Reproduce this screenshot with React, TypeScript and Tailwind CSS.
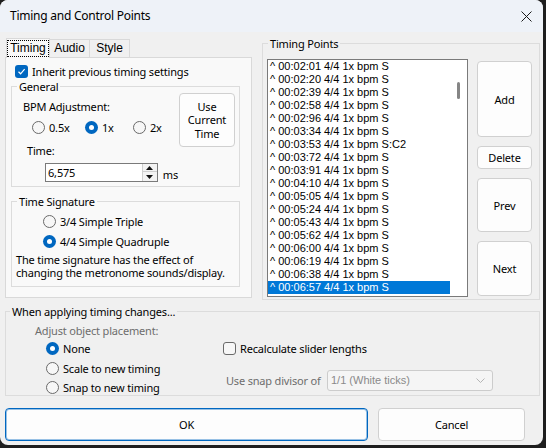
import React from 'react';

const ui = "font-['Noto_Sans',sans-serif] text-[11px] leading-[13px] tracking-[-0.18px]";

const points = [
  '00:02:01', '00:02:20', '00:02:39', '00:02:58', '00:02:96', '00:03:34',
  '00:03:53', '00:03:72', '00:03:91', '00:04:10', '00:05:05', '00:05:24',
  '00:05:43', '00:05:62', '00:06:00', '00:06:19', '00:06:38', '00:06:57',
];

function Radio({ checked }: { checked?: boolean }) {
  if (checked) {
    return (
      <span className="w-[13px] h-[13px] rounded-full bg-[#0067c0] flex items-center justify-center shrink-0">
        <span className="w-[5px] h-[5px] rounded-full bg-white" />
      </span>
    );
  }
  return <span className="w-[13px] h-[13px] rounded-full border border-[#6a6a6a] bg-[#f7f7f7] shrink-0" />;
}

function Check({ checked }: { checked?: boolean }) {
  if (checked) {
    return (
      <span className="w-[13px] h-[13px] rounded-[3px] bg-[#0067c0] flex items-center justify-center shrink-0">
        <svg width="9" height="9" viewBox="0 0 9 9">
          <polyline points="1.5,4.8 3.6,6.8 7.6,2.2" fill="none" stroke="white" strokeWidth="1.2" />
        </svg>
      </span>
    );
  }
  return <span className="w-[13px] h-[13px] rounded-[3px] border border-[#6a6a6a] bg-[#f7f7f7] shrink-0" />;
}

function Option({ checked, label, className }: { checked?: boolean; label: string; className?: string }) {
  return (
    <div className={`flex items-center gap-[4px] h-[13px] ${className ?? ''}`}>
      <Radio checked={checked} />
      <span className="whitespace-nowrap">{label}</span>
    </div>
  );
}

function Btn({ children, className }: { children: React.ReactNode; className?: string }) {
  return (
    <button className={`bg-[#fdfdfd] border border-[#d0d0d0] rounded-[4px] flex items-center justify-center text-center text-black ${className ?? ''}`}>
      {children}
    </button>
  );
}

export default function App() {
  return (
    <div className={`w-[546px] h-[448px] bg-[#1e1e1e] ${ui} text-black`}>
      <div className="w-[543px] h-[445px] rounded-[8px] overflow-hidden bg-[#f0f0f0] flex flex-col">
        {/* Title bar */}
        <div className="h-[32px] bg-[#eef2f8] flex items-center justify-between pl-[10px] pr-[11px] shrink-0">
          <span className="text-[12px] leading-[16px] tracking-[-0.25px]">Timing and Control Points</span>
          <svg width="11" height="11" viewBox="0 0 11 11">
            <path d="M0.5 0.5 L10.5 10.5 M10.5 0.5 L0.5 10.5" stroke="#1a1a1a" strokeWidth="1" />
          </svg>
        </div>

        {/* Top area */}
        <div className="flex pl-[5px] mt-[6px]">
          {/* Tabs + panel */}
          <div className="w-[247px] flex flex-col">
            <div className="flex items-end h-[19px] pl-[1px] font-['Liberation_Sans',sans-serif] text-[12px] tracking-normal">
              <div className="w-[44px] h-[20px] -mb-[1px] bg-[#f9f9f9] border border-b-0 border-[#d9d9d9] flex items-center justify-center relative z-10">
                <span className="border border-dotted border-black px-[2px] leading-[15px]">Timing</span>
              </div>
              <div className="w-[40px] h-[18px] border border-l-0 border-b-0 border-[#d9d9d9] flex items-center justify-center">Audio</div>
              <div className="w-[40px] h-[18px] border border-l-0 border-b-0 border-[#d9d9d9] flex items-center justify-center">Style</div>
            </div>
            <div className="h-[241px] bg-[#f9f9f9] border border-[#d9d9d9] flex flex-col">
              <div className="flex items-center gap-[4px] mt-[7px] ml-[9px]">
                <Check checked />
                <span>Inherit previous timing settings</span>
              </div>

              <fieldset className="ml-[5px] mt-[2px] w-[229px] h-[107px] border border-[#dcdcdc]">
                <legend className="ml-[5px] px-[2px]">General</legend>
                <div className="flex">
                  <div className="flex flex-col w-[166px]">
                    <span className="mt-[7px] ml-[11px]">BPM Adjustment:</span>
                    <div className="flex mt-[8px] ml-[20px]">
                      <Option label="0.5x" className="w-[53px]" />
                      <Option checked label="1x" className="w-[48px]" />
                      <Option label="2x" />
                    </div>
                    <span className="mt-[10px] ml-[15px]">Time:</span>
                    <div className="flex items-center mt-[6px] ml-[33px]">
                      <div className="w-[113px] h-[19px] bg-white border border-[#7a7a7a] flex items-center justify-between">
                        <span className="pl-[2px]">6,575</span>
                        <div className="w-[15px] h-[17px] border-l border-[#cfcfcf] bg-[#f3f3f3] flex flex-col">
                          <div className="h-[8px] flex items-center justify-center border-b border-[#cfcfcf]">
                            <svg width="7" height="4" viewBox="0 0 7 4"><path d="M0 4 L3.5 0 L7 4 Z" fill="#111" /></svg>
                          </div>
                          <div className="flex-1 flex items-center justify-center">
                            <svg width="7" height="4" viewBox="0 0 7 4"><path d="M0 0 L3.5 4 L7 0 Z" fill="#111" /></svg>
                          </div>
                        </div>
                      </div>
                      <span className="ml-[5px] mt-[3px]">ms</span>
                    </div>
                  </div>
                  <Btn className="w-[56px] h-[54px] leading-[13.5px] ml-[1px]">
                    Use<br />Current<br />Time
                  </Btn>
                </div>
              </fieldset>

              <fieldset className="ml-[5px] mt-[8px] w-[229px] h-[92px] border border-[#dcdcdc]">
                <legend className="ml-[5px] px-[2px]">Time Signature</legend>
                <Option label="3/4 Simple Triple" className="mt-[7px] ml-[31px]" />
                <Option checked label="4/4 Simple Quadruple" className="mt-[7px] ml-[31px]" />
                <div className="mt-[5px] ml-[4px] whitespace-nowrap flex flex-col">
                  <span className="h-[13px]">The time signature has the effect of</span>
                  <span className="h-[13px]">changing the metronome sounds/display.</span>
                </div>
              </fieldset>
            </div>
          </div>

          {/* Timing points */}
          <fieldset className="ml-[10px] -mt-[1px] w-[278px] h-[263px] border border-[#dcdcdc]">
            <legend className="ml-[5px] px-[2px]">Timing Points</legend>
            <div className="flex">
              <div className="mt-[9px] ml-[4px] w-[201px] h-[238px] bg-white border border-[#7a7a7a] flex">
                <div className="w-[182px] flex flex-col font-['Liberation_Sans',sans-serif] text-[11px] leading-[13px] tracking-normal">
                  {points.map((p, i) => {
                    const sel = i === points.length - 1;
                    return (
                      <div key={p} className={`h-[13px] pl-[2px] whitespace-nowrap ${sel ? 'bg-[#0078d7] text-white' : ''}`}>
                        ^ {p} 4/4 1x bpm {i === 6 ? 'S:C2' : 'S'}
                      </div>
                    );
                  })}
                </div>
                <div className="flex-1 flex justify-center">
                  <div className="mt-[22px] w-[3px] h-[17px] rounded-full bg-[#858585]" />
                </div>
              </div>
              <div className="ml-[9px] flex flex-col w-[55px]">
                <Btn className="mt-[11px] h-[76px]">Add</Btn>
                <Btn className="mt-[9px] h-[23px]">Delete</Btn>
                <Btn className="mt-[9px] h-[54px]">Prev</Btn>
                <Btn className="mt-[9px] h-[55px]">Next</Btn>
              </div>
            </div>
          </fieldset>
        </div>

        {/* Bottom group */}
        <fieldset className="ml-[5px] mt-[5px] w-[535px] h-[91px] border border-[#dcdcdc]">
          <legend className="ml-[4px] px-[2px]">When applying timing changes...</legend>
          <div className="flex">
            <div className="w-[217px] flex flex-col">
              <span className="mt-[6px] ml-[29px] text-[#6d6d6d]">Adjust object placement:</span>
              <Option checked label="None" className="mt-[5px] ml-[40px]" />
              <Option label="Scale to new timing" className="mt-[7px] ml-[40px]" />
              <Option label="Snap to new timing" className="mt-[6px] ml-[40px]" />
            </div>
            <div className="flex flex-col">
              <div className="flex items-center gap-[4px] mt-[24px]">
                <Check />
                <span>Recalculate slider lengths</span>
              </div>
              <div className="flex items-center mt-[15px]">
                <span className="w-[104px] pl-[3px] whitespace-nowrap text-[#6d6d6d]">Use snap divisor of</span>
                <div className="w-[166px] h-[21px] bg-[#f5f5f5] border border-[#cccccc] rounded-[3px] flex items-center justify-between pl-[3px] pr-[7px]">
                  <span className="font-['Liberation_Sans',sans-serif] tracking-normal text-[#8a8a8a]">1/1 (White ticks)</span>
                  <svg width="9" height="5" viewBox="0 0 9 5"><path d="M0.5 0.5 L4.5 4.5 L8.5 0.5" fill="none" stroke="#b5b5b5" strokeWidth="1" /></svg>
                </div>
              </div>
            </div>
          </div>
        </fieldset>

        {/* Dialog buttons */}
        <div className="flex ml-[5px] mt-[12px]">
          <Btn className="w-[363px] h-[33px] !border-[#0067c0] ring-1 ring-inset ring-[#0067c0]/40">OK</Btn>
          <Btn className="w-[147px] h-[33px] ml-[10px]">Cancel</Btn>
        </div>
      </div>
    </div>
  );
}
